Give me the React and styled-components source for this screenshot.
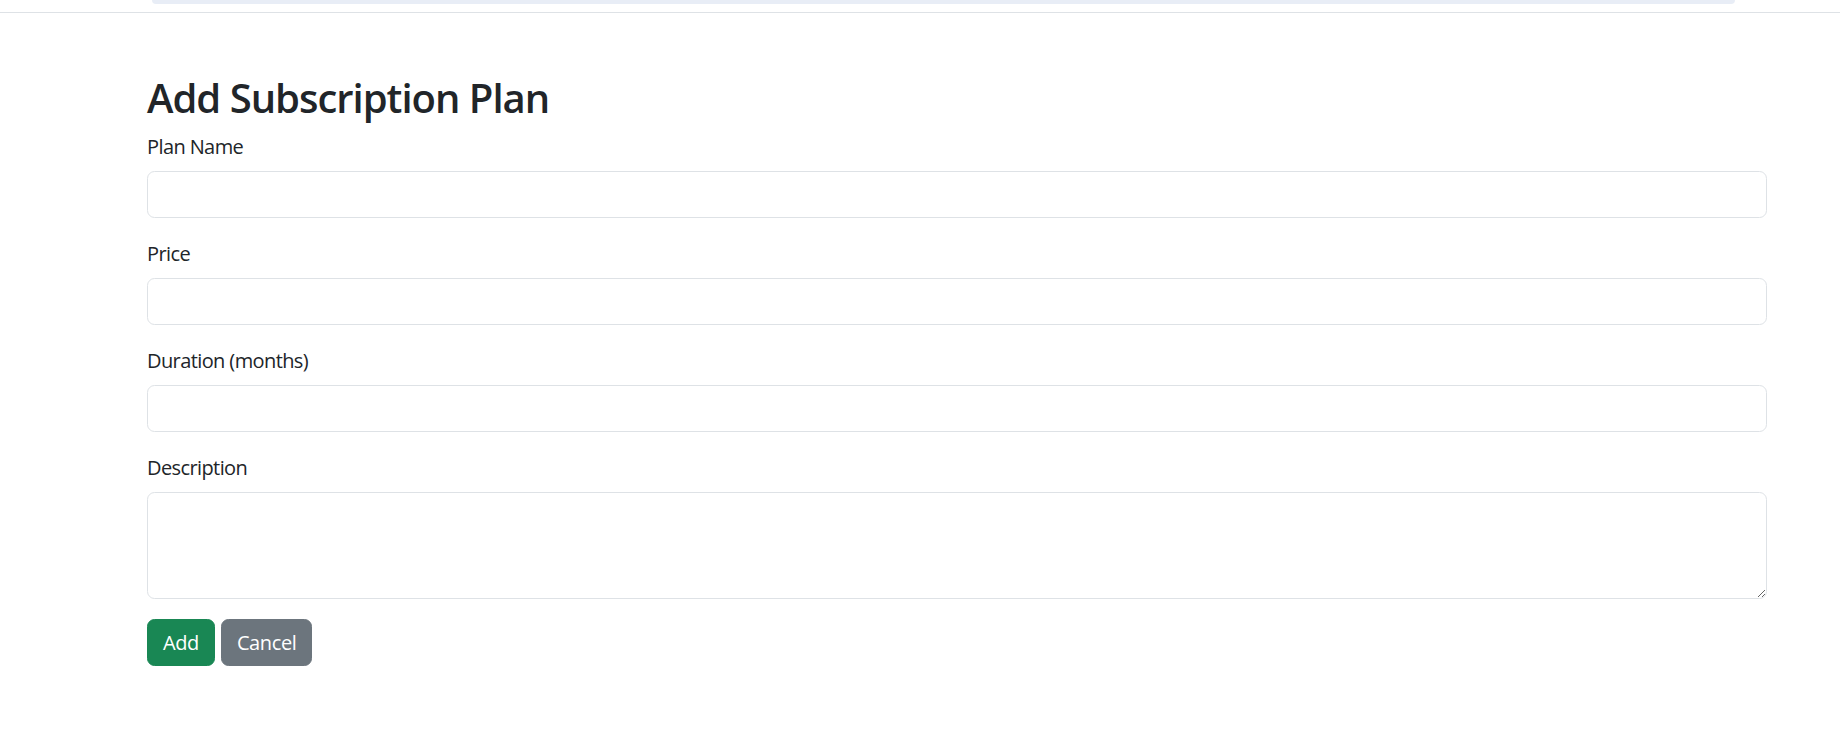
import React, { useState } from "react";
import styled, { createGlobalStyle } from "styled-components";

const GlobalStyle = createGlobalStyle`
  * { box-sizing: border-box; }
  body {
    margin: 0;
    background: #ffffff;
    color: #212529;
    font-family: "Open Sans", "Noto Sans", sans-serif;
    font-size: 20px;
    line-height: 1.5;
  }
`;

const TopBar = styled.div`
  height: 13px;
  border-bottom: 1px solid #dee2e6;
  padding: 0 105px 0 152px;
`;

const TopPill = styled.div`
  height: 4px;
  background: #e8edf6;
  border-radius: 0 0 14px 14px;
`;

const Container = styled.div`
  padding: 0 73px 0 147px;
  margin-top: 60px;
`;

const Title = styled.h2`
  margin: 0 0 9px;
  padding-top: 1px;
  font-size: 40px;
  font-weight: 600;
  line-height: 1.2;
  letter-spacing: -1px;
`;

const Field = styled.div`
  margin-bottom: 20px;
`;

const Label = styled.label`
  display: inline-block;
  margin-bottom: 9px;
  padding-top: 1px;
  letter-spacing: -0.6px;
`;

const Input = styled.input`
  display: block;
  width: 100%;
  height: 47px;
  padding: 7px 15px;
  font: inherit;
  color: #212529;
  border: 1px solid #dee2e6;
  border-radius: 7.5px;
  outline: none;
`;

const TextArea = styled.textarea`
  display: block;
  width: 100%;
  height: 107px;
  padding: 7px 15px;
  font: inherit;
  color: #212529;
  border: 1px solid #dee2e6;
  border-radius: 7.5px;
  outline: none;
  resize: vertical;
`;

const Actions = styled.div`
  display: flex;
  gap: 6px;
`;

const Button = styled.button`
  height: 47px;
  padding: 1px 15px 0;
  font: inherit;
  letter-spacing: -0.4px;
  color: #ffffff;
  background: ${p => (p.$variant === "secondary" ? "#6c757d" : "#198754")};
  border: 1px solid ${p => (p.$variant === "secondary" ? "#6c757d" : "#198754")};
  border-radius: 7.5px;
  cursor: pointer;
`;

const fields = [
  { id: "name", label: "Plan Name", type: "text" },
  { id: "price", label: "Price", type: "number" },
  { id: "duration", label: "Duration (months)", type: "number" }
];

const App = () => {
  const [form, setForm] = useState({ name: "", price: "", duration: "", description: "" });
  const update = key => e => setForm({ ...form, [key]: e.target.value });

  return (
    <>
      <GlobalStyle />
      <TopBar>
        <TopPill />
      </TopBar>
      <Container>
        <Title>Add Subscription Plan</Title>
        {fields.map(f => (
          <Field key={f.id}>
            <Label htmlFor={f.id}>{f.label}</Label>
            <Input id={f.id} type={f.type} value={form[f.id]} onChange={update(f.id)} />
          </Field>
        ))}
        <Field>
          <Label htmlFor="description">Description</Label>
          <TextArea id="description" value={form.description} onChange={update("description")} />
        </Field>
        <Actions>
          <Button type="submit">Add</Button>
          <Button type="button" $variant="secondary">Cancel</Button>
        </Actions>
      </Container>
    </>
  );
};

export default App;
